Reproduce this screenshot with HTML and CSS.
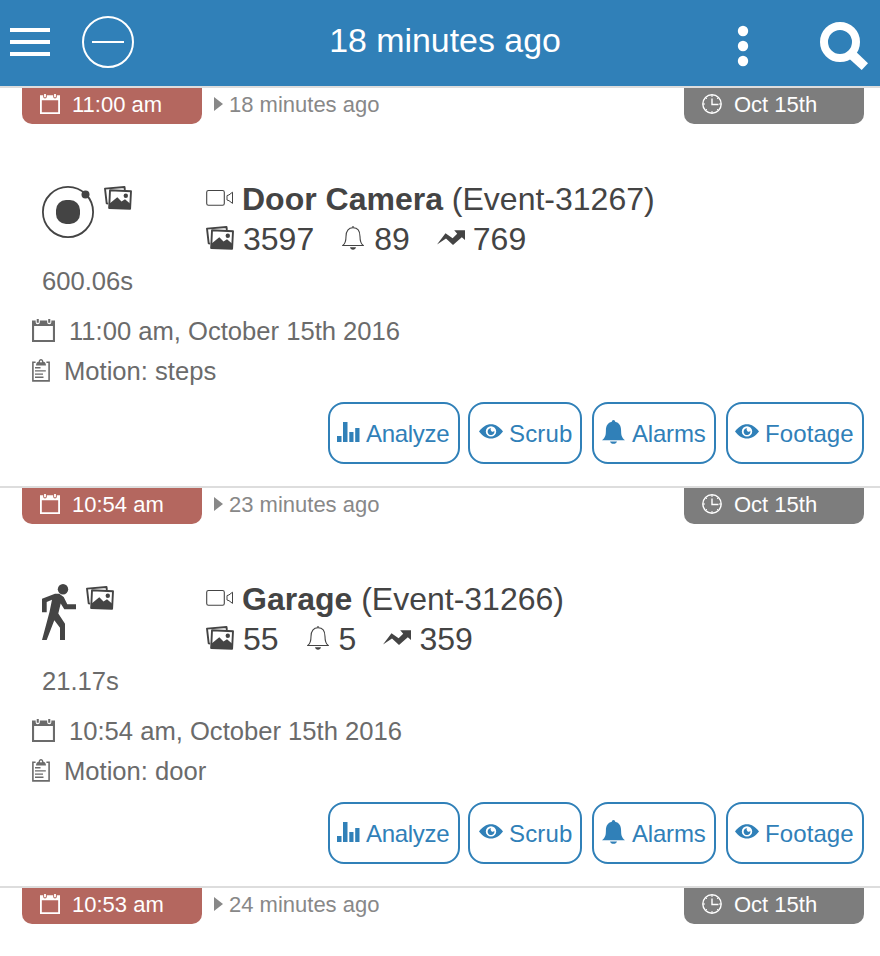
FILE: index.html
```html
<!DOCTYPE html>
<html lang="en">
<head>
<meta charset="utf-8">
<title>Events</title>
<link rel="stylesheet" href="styles.css">
</head>
<body>
<svg class="defs" aria-hidden="true">
  <symbol id="calendar" viewBox="0 0 22 22">
    <path fill="currentColor" fill-rule="evenodd" d="M0 1.500h3.500v1.500a2 2 0 0 0 4 0V1.500h7v1.500a2 2 0 0 0 4 0V1.500H22V22H0zM2 6.800v13.200h18V6.800z"/>
    <path fill="currentColor" d="M4.500 0h2v3.600h-2zM15.500 0h2v3.600h-2z"/>
  </symbol>
  <symbol id="clock" viewBox="0 0 20 20">
    <circle cx="10" cy="10" r="9.200" fill="none" stroke="currentColor" stroke-width="1.400"/>
    <path fill="none" stroke="currentColor" stroke-width="1.400" d="M10 4.500v6h6.500"/>
    <path fill="none" stroke="currentColor" stroke-width="1" d="M10 1v2M10 17v2M1 10h2M17 10h2M3.600 3.600l1.300 1.300M15.100 15.100l1.300 1.300M3.600 16.400l1.300-1.300M15.100 4.900l1.300-1.300"/>
  </symbol>
  <symbol id="images" viewBox="0 0 28 24">
    <path fill="none" stroke="currentColor" stroke-width="1.900" stroke-linejoin="round" d="M4.200 17.600L2.700 17.400 1 2.600 20.500 1l.4 3"/>
    <path fill="none" stroke="currentColor" stroke-width="1.900" stroke-linejoin="round" d="M6 4.200l21 1-.9 17.600-20.900-.8z"/>
    <path fill="currentColor" d="M5 18l8.300-6.800 4.200 4.300 3.500-2.300 5.800 5-.4 4.900-21.700-.8z"/>
    <circle cx="21.800" cy="9.800" r="2.200" fill="currentColor"/>
  </symbol>
  <symbol id="video" viewBox="0 0 28 18">
    <rect x=".7" y="1.500" width="17.600" height="14.800" rx="1.800" fill="none" stroke="currentColor" stroke-width="1.100"/>
    <path fill="none" stroke="currentColor" stroke-width="1" d="M21 6.600l2-.7 3.500-2.700v11.200L23 11.700l-2-.7z"/>
  </symbol>
  <symbol id="bell-thin" viewBox="0 0 22 24">
    <path fill="none" stroke="currentColor" stroke-width="1.100" d="M.8 19.500C3.500 17.500 4 15.500 4 10.500 4 5 6.500 1.800 11 1.800S18 5 18 10.500c0 5 .5 7 3.200 9z"/>
    <path fill="currentColor" d="M9.700 1.600a1.300 1.300 0 0 1 2.600 0zM8 21.300h6c-.3 1.500-1.400 2.400-3 2.400s-2.700-.9-3-2.400z"/>
  </symbol>
  <symbol id="trend" viewBox="0 0 28 15">
    <path fill="currentColor" d="M0 14.500L8.500 3.200 15.600 8.200 20.200 3.800 17.200.2H28V10L24.800 7.200 16 15 9 8.600z"/>
  </symbol>
  <symbol id="clipboard" viewBox="0 0 18 23">
    <path fill="none" stroke="currentColor" stroke-width="1.600" d="M3.600 3.200H.9v18.700h16.200V3.200h-2.700"/>
    <path fill="currentColor" fill-rule="evenodd" d="M4 6.500c.1-2.400 1-3.400 2.600-3.700C6.800 1 7.700 0 9 0s2.200 1 2.400 2.800c1.600.3 2.500 1.300 2.600 3.700zM9 1.600a1 1 0 1 0 0 2 1 1 0 0 0 0-2z"/>
    <path fill="none" stroke="currentColor" stroke-width="1.400" d="M3 8.700h5.500M3 11.900h10.800M3 15.100h8M3 18.300h8.500"/>
  </symbol>
  <symbol id="bars" viewBox="0 0 23 20">
    <path fill="currentColor" d="M0 14h4.500v6H0zM6 0h4.500v20H6zM12.300 10h4.200v10h-4.200zM18.200 6h4.300v14h-4.300z"/>
  </symbol>
  <symbol id="eye" viewBox="0 0 24 15">
    <path fill="currentColor" fill-rule="evenodd" d="M0 7.500C3.500 3 7.300.3 12 .3s8.500 2.700 12 7.200c-3.500 4.500-7.300 7-12 7S3.500 12 0 7.500zM12 2.200a5.200 5.200 0 1 0 0 10.400 5.200 5.200 0 0 0 0-10.400z"/>
    <path fill="currentColor" d="M12.100 4.300a1.900 1.900 0 0 0 3.200 2.500 3.400 3.400 0 1 1-3.200-2.500z"/>
  </symbol>
  <symbol id="bell" viewBox="0 0 23 24">
    <path fill="currentColor" d="M0 20.200c3.500-3 3.800-5 3.900-9.500C4 5.600 5.800 2.800 9.800 1.800a1.700 1.700 0 0 1 3.400 0c4 1 5.800 3.800 5.900 8.900.1 4.500.4 6.500 3.900 9.500zM8 21.500h7c-.5 1.500-1.700 2.300-3.500 2.300S8.500 23 8 21.500z"/>
  </symbol>
</svg>

<header class="bar">
  <svg class="menu" viewBox="0 0 40 28"><path fill="#fff" d="M0 0h40v4H0zM0 12h40v4H0zM0 24h40v4H0z"/></svg>
  <svg class="collapse" viewBox="0 0 52 52"><circle cx="26" cy="26" r="25" fill="none" stroke="#fff" stroke-width="2"/><path fill="#fff" d="M10 25h32v2H10z"/></svg>
  <h1 class="title">18 minutes ago</h1>
  <svg class="more" viewBox="0 0 12 42"><g fill="#fff"><circle cx="6" cy="6" r="5.200"/><circle cx="6" cy="21" r="5.200"/><circle cx="6" cy="36" r="5.200"/></g></svg>
  <svg class="search" viewBox="0 0 48 48"><circle cx="20" cy="20" r="16" fill="none" stroke="#fff" stroke-width="8"/><path fill="#fff" d="M35.700 29.500L48 41.300 41.700 48 28.700 36.300z"/></svg>
</header>

<main>
  <article class="event">
    <div class="tags">
      <div class="tag time"><svg class="i-cal"><use href="#calendar"/></svg><span>11:00 am</span></div>
      <div class="ago"><i class="arrow"></i><span>18 minutes ago</span></div>
      <div class="tag date"><svg class="i-clock"><use href="#clock"/></svg><span>Oct 15th</span></div>
    </div>
    <div class="summary">
      <div class="kind">
        <div class="kind-icons">
          <svg class="i-orbit" viewBox="0 0 52 52"><circle cx="26" cy="26" r="25.100" fill="none" stroke="currentColor" stroke-width="1.800"/><circle cx="43.500" cy="8.500" r="4" fill="currentColor"/><rect x="14" y="14" width="24" height="24" rx="10" fill="currentColor"/></svg>
          <svg class="i-images"><use href="#images"/></svg>
        </div>
        <div class="duration">600.06s</div>
      </div>
      <div class="info">
        <h2 class="name"><svg class="i-video"><use href="#video"/></svg><span><b>Door Camera</b> (Event-31267)</span></h2>
        <div class="stats">
          <svg class="i-images"><use href="#images"/></svg><span>3597</span>
          <svg class="i-bell-thin"><use href="#bell-thin"/></svg><span>89</span>
          <svg class="i-trend"><use href="#trend"/></svg><span>769</span>
        </div>
      </div>
    </div>
    <div class="line when"><svg class="i-cal"><use href="#calendar"/></svg><span>11:00 am, October 15th 2016</span></div>
    <div class="line cause"><svg class="i-clip"><use href="#clipboard"/></svg><span>Motion: steps</span></div>
    <div class="actions">
      <button class="analyze"><svg><use href="#bars"/></svg><span>Analyze</span></button>
      <button class="scrub"><svg><use href="#eye"/></svg><span>Scrub</span></button>
      <button class="alarms"><svg><use href="#bell"/></svg><span>Alarms</span></button>
      <button class="footage"><svg><use href="#eye"/></svg><span>Footage</span></button>
    </div>
  </article>

  <article class="event">
    <div class="tags">
      <div class="tag time"><svg class="i-cal"><use href="#calendar"/></svg><span>10:54 am</span></div>
      <div class="ago"><i class="arrow"></i><span>23 minutes ago</span></div>
      <div class="tag date"><svg class="i-clock"><use href="#clock"/></svg><span>Oct 15th</span></div>
    </div>
    <div class="summary">
      <div class="kind">
        <div class="kind-icons">
          <svg class="i-walk" viewBox="0 0 34 56"><g fill="currentColor"><circle cx="21" cy="5.200" r="5.200"/><path d="M0 14.700L13 9.700h4.300L21.700 13l3.600 7.300H34v5H22.300l-3.600-5.800-2.400 10L23 39.700V56h-5V43.700l-5.700-7.400L4.700 56H0L7.500 28 10 15.700 4.700 18v10.300H0z"/></g></svg>
          <svg class="i-images"><use href="#images"/></svg>
        </div>
        <div class="duration">21.17s</div>
      </div>
      <div class="info">
        <h2 class="name"><svg class="i-video"><use href="#video"/></svg><span><b>Garage</b> (Event-31266)</span></h2>
        <div class="stats">
          <svg class="i-images"><use href="#images"/></svg><span>55</span>
          <svg class="i-bell-thin"><use href="#bell-thin"/></svg><span>5</span>
          <svg class="i-trend"><use href="#trend"/></svg><span>359</span>
        </div>
      </div>
    </div>
    <div class="line when"><svg class="i-cal"><use href="#calendar"/></svg><span>10:54 am, October 15th 2016</span></div>
    <div class="line cause"><svg class="i-clip"><use href="#clipboard"/></svg><span>Motion: door</span></div>
    <div class="actions">
      <button class="analyze"><svg><use href="#bars"/></svg><span>Analyze</span></button>
      <button class="scrub"><svg><use href="#eye"/></svg><span>Scrub</span></button>
      <button class="alarms"><svg><use href="#bell"/></svg><span>Alarms</span></button>
      <button class="footage"><svg><use href="#eye"/></svg><span>Footage</span></button>
    </div>
  </article>

  <article class="event last">
    <div class="tags">
      <div class="tag time"><svg class="i-cal"><use href="#calendar"/></svg><span>10:53 am</span></div>
      <div class="ago"><i class="arrow"></i><span>24 minutes ago</span></div>
      <div class="tag date"><svg class="i-clock"><use href="#clock"/></svg><span>Oct 15th</span></div>
    </div>
  </article>
</main>
</body>
</html>
```
FILE: styles.css
```css
* { box-sizing: border-box; }
body {
  margin: 0;
  width: 880px;
  height: 956px;
  overflow: hidden;
  background: #fff;
  color: #444;
  font-family: "Liberation Sans", Arial, sans-serif;
}
svg { display: block; flex: none; }
span { white-space: nowrap; }
.defs { display: none; }

.bar {
  display: flex;
  align-items: flex-start;
  height: 88px;
  padding-left: 10px;
  background: #3080b8;
  border-bottom: 2px solid #ddd;
}
.menu { width: 40px; height: 28px; margin-top: 28px; }
.collapse { width: 52px; height: 52px; margin: 16px 0 0 32px; }
.title {
  width: 240px;
  margin: 20px 0 0 191px;
  color: #fff;
  font-size: 33.9px;
  font-weight: 400;
  line-height: 40px;
  text-align: center;
  white-space: nowrap;
}
.more { width: 12px; height: 42px; margin: 25px 0 0 172px; }
.search { width: 48px; height: 48px; margin: 22px 0 0 71px; }

.event { height: 400px; border-bottom: 2px solid #ddd; }
.last { height: 68px; border: 0; }

.tags {
  display: flex;
  padding: 0 16px 0 22px;
  font-size: 22px;
  line-height: 33px;
}
.tag {
  display: flex;
  width: 180px;
  height: 36px;
  padding-left: 18px;
  border-radius: 0 0 10px 10px;
  color: #fff;
}
.time { background: #b4675f; }
.date { background: #7d7d7d; }
.tag svg { width: 20px; height: 20px; margin: 6px 12px 0 0; }
.ago { display: flex; flex: 1; padding-left: 12px; color: #888; }
.arrow {
  width: 9px;
  height: 14px;
  margin: 9px 6px 0 0;
  background: #888;
  clip-path: polygon(0 0, 100% 50%, 0 100%);
}

.summary { display: flex; margin-top: 55px; padding-left: 42px; }
.kind { width: 164px; padding-top: 7px; }
.kind-icons { display: flex; height: 75px; gap: 10px; }
.i-orbit { width: 52px; height: 52px; }
.i-walk { width: 34px; height: 56px; margin-top: -2px; }
.i-images { width: 28px; height: 24px; }
.duration { color: #6b6b6b; font-size: 25.6px; line-height: 40px; }
.name, .stats {
  display: flex;
  height: 40px;
  margin: 0;
  font-size: 32px;
  font-weight: 400;
  line-height: 40px;
}
.i-video { width: 28px; height: 18px; margin: 10px 8px 0 0; }
.stats .i-images { margin: 7px 9px 0 0; }
.i-bell-thin { width: 22px; height: 24px; margin: 7px 10px 0 28px; }
.i-trend { width: 28px; height: 15px; margin: 11px 8px 0 27px; }

.line {
  display: flex;
  height: 40px;
  padding-left: 32px;
  color: #6b6b6b;
  font-size: 25.6px;
  line-height: 40px;
}
.when { margin-top: 10px; }
.when svg { width: 23px; height: 23px; margin: 8px 14px 0 0; }
.cause svg { width: 18px; height: 23px; margin: 8px 14px 0 0; }

.actions { display: flex; margin-top: 11px; padding-left: 328px; }
button {
  display: flex;
  height: 62px;
  margin: 0;
  padding: 0;
  border: 2px solid #3080b8;
  border-radius: 16px;
  background: #fff;
  color: #3080b8;
  font: 24px/60px "Liberation Sans", Arial, sans-serif;
}
.analyze { width: 132px; padding-left: 7px; letter-spacing: -0.3px; }
.analyze svg { width: 23px; height: 20px; margin: 18px 6px 0 0; }
.scrub { width: 114px; margin-left: 8px; padding-left: 9px; letter-spacing: 0.15px; }
.alarms { width: 124px; margin-left: 10px; padding-left: 8px; letter-spacing: -0.2px; }
.alarms svg { width: 23px; height: 24px; margin: 16px 7px 0 0; }
.footage { width: 138px; margin-left: 10px; padding-left: 7px; letter-spacing: 0.1px; }
.scrub svg, .footage svg { width: 24px; height: 15px; margin: 20px 6px 0 0; }
```
